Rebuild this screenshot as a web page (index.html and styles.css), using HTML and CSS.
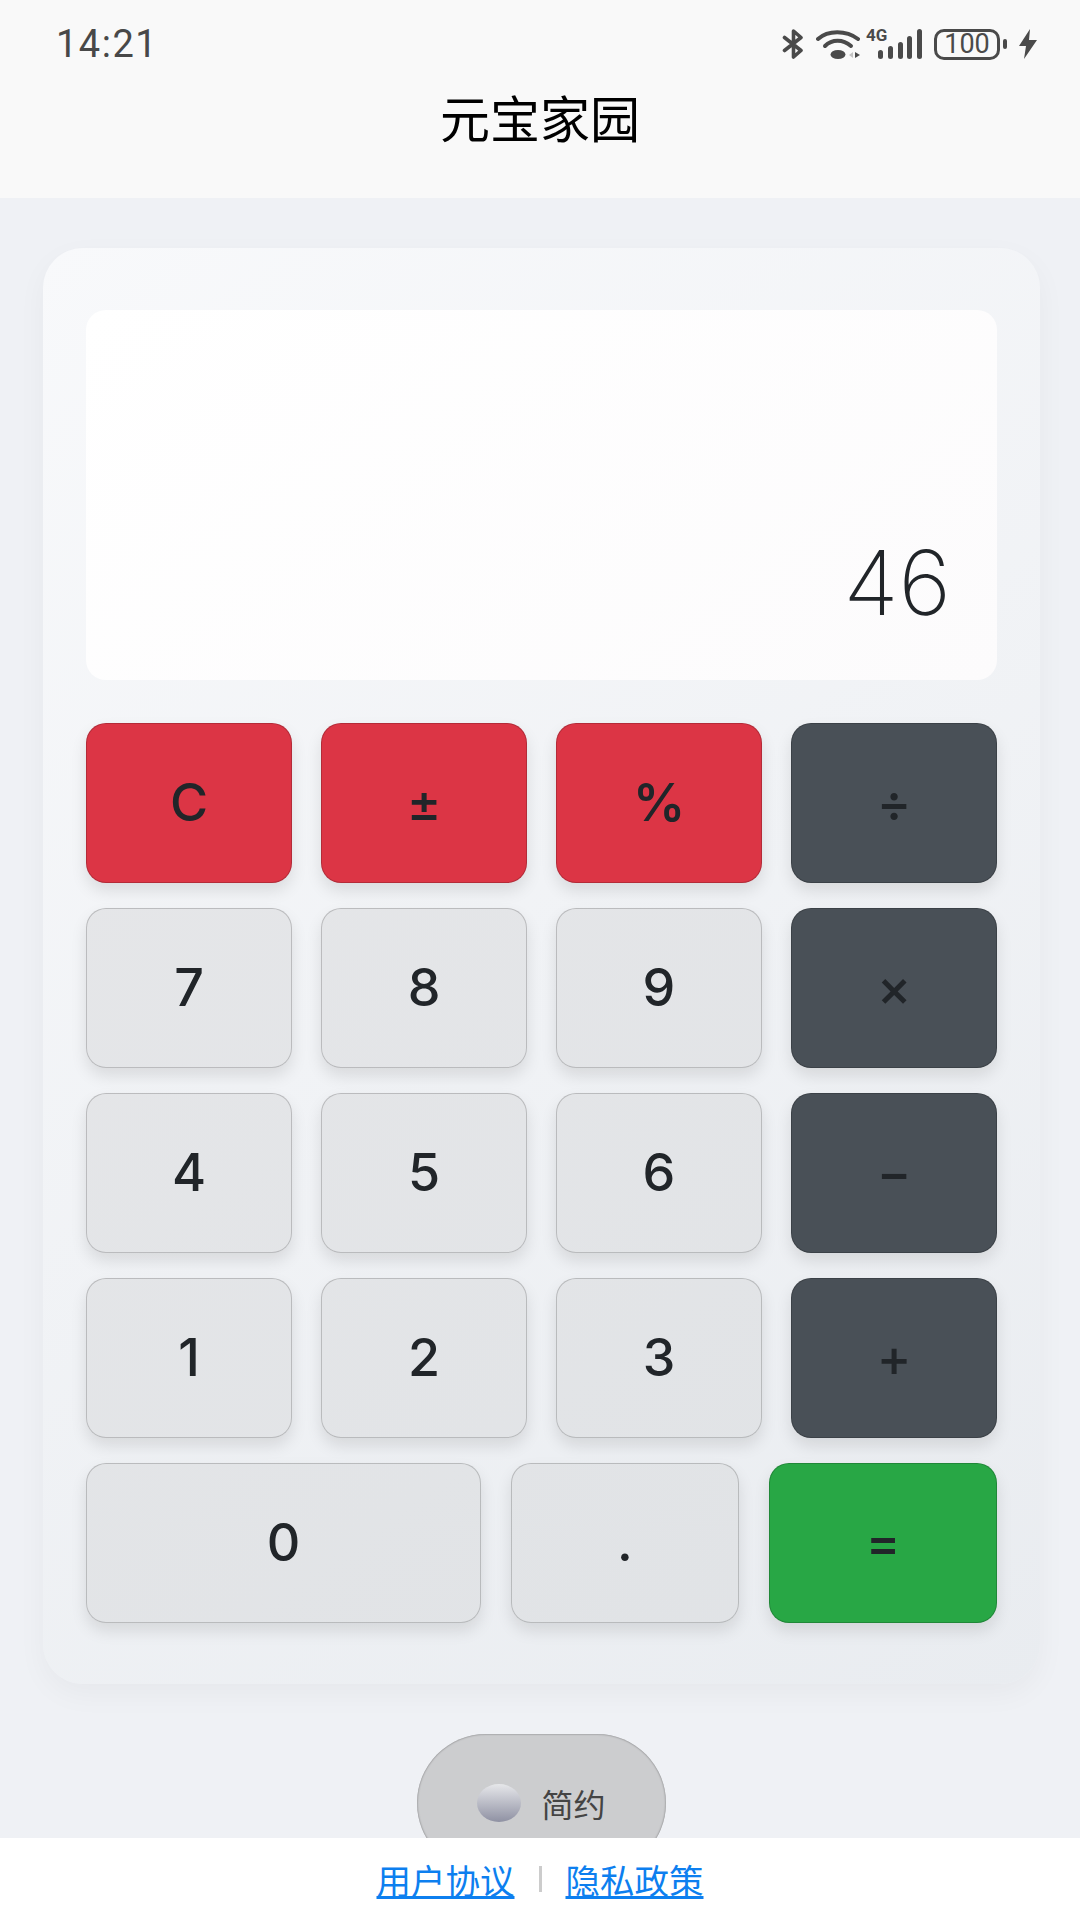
FILE: index.html
```html
<!DOCTYPE html>
<html lang="zh">
<head>
	<meta charset="utf-8">
	<title>元宝家园</title>
	<link rel="stylesheet" href="styles.css">
</head>
<body>
	<header class="top">
		<div class="status">
			<span class="time">14:21</span>
			<div class="status-icons">
				<svg class="icon-bt" width="22" height="30" viewBox="0 0 22 30" fill="none" stroke="#4a4a4a" stroke-width="3.6" stroke-linecap="round" stroke-linejoin="round">
					<path d="M2.5 8.5 19 21.5 11.5 28V2L19 8.5 2.5 21.5"/>
				</svg>
				<svg class="icon-wifi" width="44" height="30" viewBox="0 0 44 30" fill="none">
					<path d="M2 10C12 1 30 1 42 10" stroke="#4a4a4a" stroke-width="4" stroke-linecap="round"/>
					<path d="M9 17C16 10 27 10 35 17" stroke="#4a4a4a" stroke-width="4" stroke-linecap="round"/>
					<ellipse cx="22" cy="25.500" rx="7.500" ry="4.500" fill="#4a4a4a"/>
					<path d="M37 23V29L33 26Z" fill="#c4c4c4"/>
					<path d="M39 23V29L44 26Z" fill="#4a4a4a"/>
				</svg>
				<div class="signal">
					<span class="net">4G</span>
					<svg width="44" height="30" viewBox="0 0 44 30" fill="#4a4a4a">
						<rect x="0" y="21" width="5" height="9" rx="2.500"/>
						<rect x="10" y="17" width="5" height="13" rx="2.500"/>
						<rect x="20" y="13" width="5" height="17" rx="2.500"/>
						<rect x="29" y="7" width="5" height="23" rx="2.500"/>
						<rect x="39" y="0" width="5" height="30" rx="2.500"/>
					</svg>
				</div>
				<div class="battery">
					<span class="battery-level">100</span>
					<span class="battery-nub"></span>
				</div>
				<svg class="icon-bolt" width="18" height="30" viewBox="0 0 18 30" fill="#4a4a4a">
					<path d="M11 0 0 17H7L5 30 18 11H10Z"/>
				</svg>
			</div>
		</div>
		<h1 class="title">元宝家园</h1>
	</header>

	<main class="page">
		<section class="calculator">
			<div class="display">46</div>
			<div class="keys">
				<div class="row">
					<button class="key key-red">C</button>
					<button class="key key-red">±</button>
					<button class="key key-red key-bold">%</button>
					<button class="key key-dark">÷</button>
				</div>
				<div class="row">
					<button class="key">7</button>
					<button class="key">8</button>
					<button class="key">9</button>
					<button class="key key-dark">×</button>
				</div>
				<div class="row">
					<button class="key">4</button>
					<button class="key">5</button>
					<button class="key">6</button>
					<button class="key key-dark">−</button>
				</div>
				<div class="row">
					<button class="key">1</button>
					<button class="key">2</button>
					<button class="key">3</button>
					<button class="key key-dark">+</button>
				</div>
				<div class="row row-last">
					<button class="key">0</button>
					<button class="key">.</button>
					<button class="key key-green">=</button>
				</div>
			</div>
		</section>

		<div class="theme-area">
			<div class="theme-pill">
				<span class="theme-knob"></span>
				<span class="theme-label">简约</span>
			</div>
		</div>
	</main>

	<footer class="links">
		<a href="#">用户协议</a>
		<span class="divider"></span>
		<a href="#">隐私政策</a>
	</footer>
</body>
</html>
```

FILE: styles.css
```css
* {
	box-sizing: border-box;
}

body {
	margin: 0;
	width: 1080px;
	height: 1920px;
	overflow: hidden;
	display: flex;
	flex-direction: column;
	background-color: #eff1f5;
	font-family: Inter, "Noto Sans CJK SC", sans-serif;
	color: #212529;
}

.top {
	height: 199px;
	background-color: #f9f9f9;
}

.status {
	height: 88px;
	padding: 0 43px 0 56px;
	display: flex;
	align-items: center;
	justify-content: space-between;
}

.time {
	font-family: Roboto, sans-serif;
	font-size: 38px;
	letter-spacing: 1.5px;
	color: #484848;
}

.status-icons {
	display: flex;
	align-items: center;
	gap: 12px;
}

.signal {
	position: relative;
	width: 50px;
	display: flex;
	justify-content: flex-end;
}

.net {
	position: absolute;
	left: -6px;
	top: -4px;
	font-family: Roboto, sans-serif;
	font-size: 17px;
	font-weight: 700;
	color: #4a4a4a;
}

.battery {
	display: flex;
	align-items: center;
	gap: 3px;
	margin-left: 0;
}

.battery-level {
	width: 66px;
	height: 31px;
	border: 3px solid #4a4a4a;
	border-radius: 10px;
	display: flex;
	align-items: center;
	justify-content: center;
	font-family: Roboto, sans-serif;
	font-size: 27px;
	color: #4a4a4a;
}

.battery-nub {
	width: 4px;
	height: 10px;
	border-radius: 2px;
	background-color: #4a4a4a;
}

.title {
	margin: 0;
	text-align: center;
	font-family: "Noto Sans CJK SC", sans-serif;
	font-size: 50px;
	font-weight: 400;
	line-height: 56px;
	color: #000;
}

.page {
	flex: 1;
	padding: 50px 40px 0 43px;
}

.calculator {
	padding: 62px 43px 61px;
	border-radius: 40px;
	background: linear-gradient(145deg, #f8f9fb, #e9ecf0);
	box-shadow: 0 10px 30px rgba(0, 0, 0, 0.04);
}

.display {
	height: 370px;
	padding: 0 46px 52px 0;
	display: flex;
	align-items: flex-end;
	justify-content: flex-end;
	border-radius: 20px;
	background: linear-gradient(145deg, #fff, #fcfbfc);
	font-size: 90px;
	font-weight: 200;
	line-height: 90px;
}

.keys {
	margin-top: 43px;
	display: flex;
	flex-direction: column;
	gap: 25px;
}

.row {
	display: grid;
	grid-template-columns: repeat(4, 1fr);
	column-gap: 29px;
}

.row-last {
	grid-template-columns: 395px 1fr 1fr;
	column-gap: 30px;
}

.key {
	height: 160px;
	padding: 0;
	border: 1px solid rgba(0, 0, 0, 0.18);
	border-radius: 20px;
	background: linear-gradient(145deg, #e8e8ea, #dfe2e5) fixed;
	box-shadow: 0 8px 16px rgba(0, 0, 0, 0.1);
	font-family: Inter, sans-serif;
	font-size: 52px;
	font-weight: 500;
	color: #212529;
}

.key-red {
	background: #dc3545;
}

.key-dark {
	background: #495057;
}

.key-green {
	background: #28a745;
}

.key-bold {
	font-weight: 600;
}

.theme-area {
	height: 104px;
	margin-top: 50px;
	overflow: hidden;
	display: flex;
	justify-content: center;
}

.theme-pill {
	width: 249px;
	height: 138px;
	padding-bottom: 0;
	display: flex;
	align-items: center;
	justify-content: center;
	gap: 20px;
	border-radius: 69px;
	background-color: #cccdcf;
	box-shadow: inset 0 0 2px rgba(0, 0, 0, 0.5);
}

.theme-knob {
	width: 44px;
	height: 38px;
	border-radius: 50%;
	background: linear-gradient(#e6e7ea, #8f91a3);
}

.theme-label {
	font-family: "Noto Sans CJK SC", sans-serif;
	font-size: 32px;
	color: #444;
}

.links {
	height: 83px;
	display: flex;
	align-items: center;
	justify-content: center;
	gap: 24px;
	background-color: #fff;
	font-family: "Noto Sans CJK SC", sans-serif;
	font-size: 34.500px;
}

.links a {
	color: #0d7fef;
}

.divider {
	width: 3px;
	height: 26px;
	background-color: #ccc;
}
```
